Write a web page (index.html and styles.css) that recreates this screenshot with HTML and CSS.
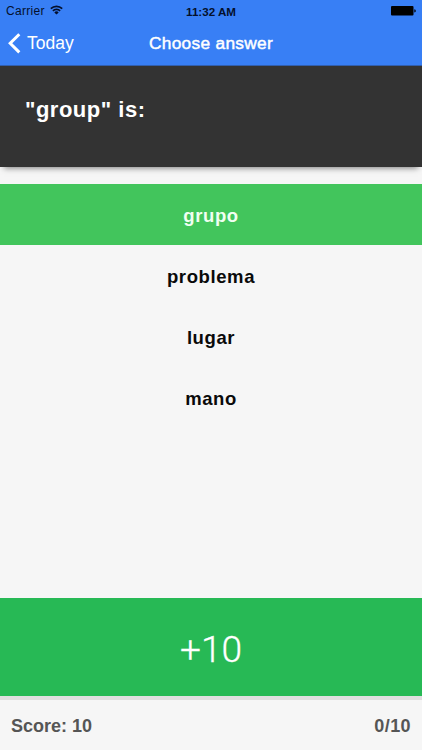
FILE: index.html
```html
<!DOCTYPE html>
<html lang="en">
<head>
<meta charset="utf-8">
<title>Choose answer</title>
<link rel="stylesheet" href="styles.css">
</head>
<body>
<div class="app">
  <header class="top">
    <div class="status">
      <div class="carrier"><span>Carrier</span>
        <svg class="wifi" width="13" height="10" viewBox="0 0 13 10" fill="none" stroke="#04102c" stroke-width="1.7"><path d="M.8 3.6a8.2 8.2 0 0 1 11.4 0M2.9 5.8a5.1 5.1 0 0 1 7.2 0"/><path d="M6.5 9.6 4.3 7.4a3 3 0 0 1 4.4 0z" fill="#04102c" stroke="none"/></svg>
      </div>
      <div class="time">11:32 AM</div>
      <svg class="battery" width="25" height="10" viewBox="0 0 25 10"><rect width="22.5" height="9.6" rx="1" fill="#000"/><path d="M23.3 3.3q1.5.2 1.5 1.6t-1.5 1.6z" fill="#000"/></svg>
    </div>
    <nav class="nav">
      <a class="back"><svg width="13" height="21" viewBox="0 0 13 21" fill="none" stroke="#fff" stroke-width="3"><path d="M11.3 1.2 2.2 10.3l9.1 9.1"/></svg><span>Today</span></a>
      <h1 class="title">Choose answer</h1>
    </nav>
  </header>
  <section class="question">"group" is:</section>
  <main class="answers">
    <div class="answer correct">grupo</div>
    <div class="answer">problema</div>
    <div class="answer">lugar</div>
    <div class="answer">mano</div>
  </main>
  <div class="points">+10</div>
  <footer class="score"><span>Score: 10</span><span class="count">0/10</span></footer>
</div>
</body>
</html>
```
FILE: styles.css
```css
* { box-sizing: border-box; }
body { margin: 0; font-family: "Liberation Sans", Arial, sans-serif; background: #f6f6f6; }
.app { width: 422px; height: 750px; display: flex; flex-direction: column; overflow: hidden; }
.top { height: 66px; background: #387ff5; border-bottom: 1px solid #315fae; }
.status { height: 22px; padding: 0 6px; display: grid; grid-template-columns: 1fr auto 1fr; align-items: center; color: #04102c; }
.carrier { display: flex; align-items: center; gap: 5px; font-size: 12px; letter-spacing: .3px; }
.wifi { margin-top: -2px; }
.time { font-size: 11.6px; font-weight: bold; }
.battery { justify-self: end; }
.nav { height: 43px; display: grid; grid-template-columns: 1fr auto 1fr; align-items: center; color: #fff; padding: 0 8px; }
.back { display: flex; align-items: center; gap: 6px; font-size: 17.5px; }
.title { margin: 0; font-size: 17.3px; font-weight: normal; letter-spacing: .3px; -webkit-text-stroke: .45px #fff; }
.question { position: relative; height: 101px; padding: 31px 25px 0; background: #333; color: #fff; font-size: 22px; line-height: 26px; font-weight: bold; letter-spacing: .5px; box-shadow: 0 5px 6px -4px rgba(0, 0, 0, .5); }
.answers { flex: 1; padding-top: 17px; }
.answer { height: 61px; line-height: 63px; text-align: center; font-size: 18.5px; font-weight: bold; letter-spacing: .6px; color: #0a0a0a; }
.correct { background: #42c55c; color: #f0fff2; }
.points { height: 98px; line-height: 103px; text-align: center; background: #27b955; color: #fff; font-family: Roboto, "Liberation Sans", sans-serif; font-weight: 300; font-size: 37px; -webkit-text-stroke: .3px #fff; }
.score { height: 54px; border-top: 4px solid #e0dfe0; padding: 3px 11px 0; display: flex; justify-content: space-between; align-items: center; color: #555; font-size: 18px; font-weight: bold; }
.count { letter-spacing: .4px; }
```
